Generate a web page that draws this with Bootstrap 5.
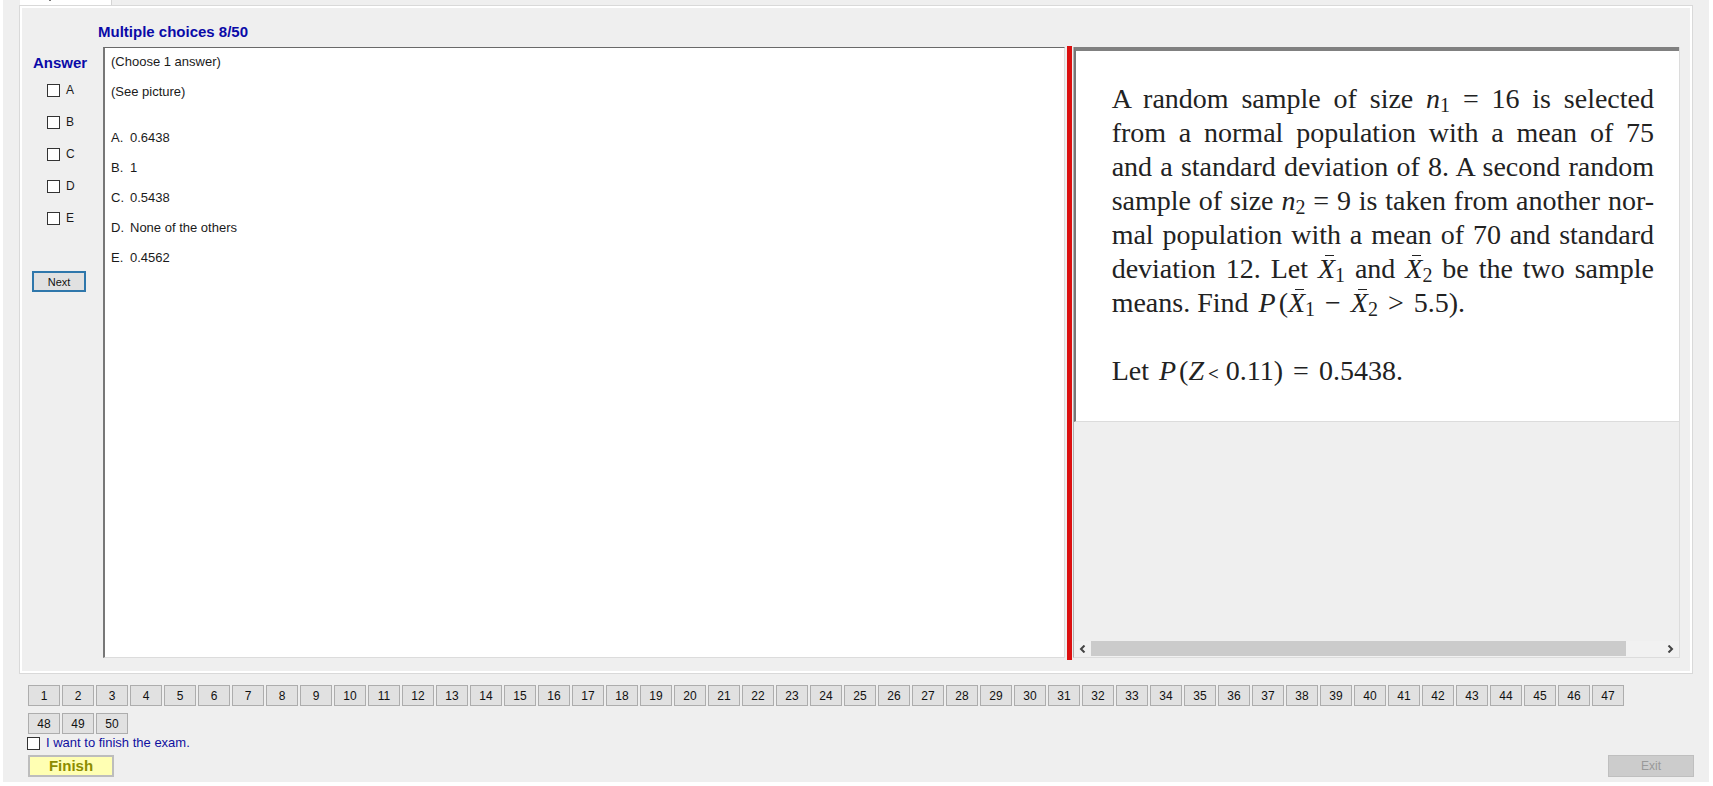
<!DOCTYPE html>
<html lang="en">
<head>
<meta charset="utf-8">
<meta name="viewport" content="width=device-width, initial-scale=1">
<title>Exam</title>
<link href="https://cdn.jsdelivr.net/npm/bootstrap@5.3.0/dist/css/bootstrap.min.css" rel="stylesheet">
<style>
body{font-family:"Liberation Sans",Arial,sans-serif;font-size:13px;line-height:16px;color:#1a1a1a;background:#fff}
.exam-window{margin:0 4px 4px 3px;background:#efefef;min-height:calc(100vh - 4px)}
.tab-strip{height:5px;padding-left:17px}
.tab-head{width:92px;height:5px;padding-left:29px;background:#fff;border-right:1px solid #d4d4d4}
.tab-head::before{content:"";display:block;width:2px;height:1px;background:#777}
.tab-page{margin:0 16px 0 16px;padding:16px 12px 15px 10px;border:1px solid #d9d9d9;box-shadow:inset 0 0 0 2px #fff}
.exam-title{font-size:15px;line-height:20px;font-weight:700;color:#0a0aa8;margin:0 0 5px 68px}
.question-row{height:calc(100vh - 175px);min-height:400px}
.answer-col{width:73px;flex:none;padding:6px 9px 0 2px}
.answer-title{font-size:15px;line-height:20px;font-weight:700;color:#0a0aa8;margin:0 0 7px 1px}
.tick{appearance:none;width:13px;height:13px;flex:none;border:1px solid #333;background:#fff;border-radius:0;margin:0}
.tick:checked{background:#333;box-shadow:inset 0 0 0 2px #fff}
.answer-opt{height:20px;margin:0 0 12px 15px;font-size:12px;gap:6px}
.plain-btn{display:flex;align-items:center;justify-content:center;padding:0;border:1px solid #adadad;background:#e1e1e1;color:#111;font-size:12px;line-height:14px}
.next-btn{width:54px;height:21px;border:2px solid #2f77ab;font-size:11px;margin-top:43px}
.question-box{flex:957 1 0;min-width:0;background:#fff;border:1px solid #dcdcdc;border-top-color:#696969;border-left:2px solid #777;padding:6px}
.question-box p{margin:0 0 14px}
.choice-list{margin:30px 0 0;padding:0;list-style:none;display:grid;gap:14px}
.choice-list li{display:flex}
.choice-list span{width:19px}
.splitter{width:5px;margin:-1px 1px 0 2px;flex:none;height:calc(100% + 3px);background:#dc1010}
.picture-pane{flex:612 1 0;min-width:0;border-right:1px solid #dcdcdc;border-bottom:1px solid #dcdcdc;border-left:1px solid #b0b0b0}
.picture{background:#fff;border-top:4px solid #808080;border-left:2px solid #777;border-bottom:1px solid #dcdcdc;padding:31px 25px 33px 36px;font-family:"Liberation Serif",serif;font-size:28px;line-height:34px;color:#222}
.picture div{white-space:nowrap;height:34px}
.full{text-align:justify;text-align-last:justify}
.picture sub{font-size:20px;line-height:0;bottom:-4px}
.math-op{margin:0 3px}
.xbar{position:relative}
.xbar::before{content:"";position:absolute;left:7px;right:1px;top:2px;height:1px;background:#222}
.lt-sign{font-size:19px;font-weight:700;margin-left:4px}
.scroll-track{height:16px;background:#f1f1f1}
.scroll-track button{width:17px;height:16px;border:0;background:none;padding:0;display:flex;align-items:center;justify-content:center}
.scroll-thumb{background:#cbcbcb;height:15px;flex:536 1 0}
.scroll-free{flex:36 1 0}
.footer-area{padding:11px 15px 5px 25px}
.number-grid{gap:7px 2px;padding-right:48px}
.number-grid .plain-btn{width:32px;height:21px}
.finish-check{height:16px;gap:6px;color:#1010a0;margin:1px 0 4px -1px}
.finish-btn{width:86px;height:22px;border:2px solid #bdbdbd;background:#ffffb3;color:#8c8c00;font-size:15px;font-weight:700;line-height:16px}
.exit-btn{width:86px;height:22px;background:#ccc;border-color:#bfbfbf;color:#999}
</style>
</head>
<body>
<main class="exam-window">
  <div class="tab-strip"><div class="tab-head"></div></div>
  <section class="tab-page">
    <h1 class="exam-title">Multiple choices 8/50</h1>
    <div class="question-row d-flex">
      <div class="answer-col">
        <h2 class="answer-title">Answer</h2>
        <label class="answer-opt d-flex align-items-center"><input class="tick" type="checkbox">A</label>
        <label class="answer-opt d-flex align-items-center"><input class="tick" type="checkbox">B</label>
        <label class="answer-opt d-flex align-items-center"><input class="tick" type="checkbox">C</label>
        <label class="answer-opt d-flex align-items-center"><input class="tick" type="checkbox">D</label>
        <label class="answer-opt d-flex align-items-center"><input class="tick" type="checkbox">E</label>
        <button type="button" class="plain-btn next-btn">Next</button>
      </div>
      <div class="question-box">
        <p>(Choose 1 answer)</p>
        <p>(See picture)</p>
        <ul class="choice-list">
          <li><span>A.</span>0.6438</li>
          <li><span>B.</span>1</li>
          <li><span>C.</span>0.5438</li>
          <li><span>D.</span>None of the others</li>
          <li><span>E.</span>0.4562</li>
        </ul>
      </div>
      <div class="splitter"></div>
      <div class="picture-pane d-flex flex-column justify-content-between">
        <div class="picture">
          <div class="full">A random sample of size <i>n</i><sub>1</sub> = 16 is selected</div>
          <div class="full">from a normal population with a mean of 75</div>
          <div class="full">and a standard deviation of 8. A second random</div>
          <div class="full">sample of size <i>n</i><sub>2</sub> = 9 is taken from another nor-</div>
          <div class="full">mal population with a mean of 70 and standard</div>
          <div class="full">deviation 12. Let <i class="xbar">X</i><sub>1</sub> and <i class="xbar">X</i><sub>2</sub> be the two sample</div>
          <div>means. Find <i class="math-op">P</i>(<i class="xbar">X</i><sub>1</sub> <span class="math-op">−</span> <i class="xbar">X</i><sub>2</sub> <span class="math-op">&gt;</span> 5.5).</div>
          <div></div>
          <div>Let <i class="math-op">P</i>(<i>Z</i><span class="lt-sign">&lt;</span> 0.11) <span class="math-op">=</span> 0.5438.</div>
        </div>
        <div class="scroll-track d-flex">
          <button type="button" aria-label="Scroll left"><svg width="7" height="8" viewBox="0 0 7 8"><path d="M5.500 .5 2 4l3.500 3.500" fill="none" stroke="#444" stroke-width="2"/></svg></button>
          <div class="scroll-thumb"></div><div class="scroll-free"></div>
          <button type="button" aria-label="Scroll right"><svg width="7" height="8" viewBox="0 0 7 8"><path d="M1.500 .5 5 4 1.500 7.500" fill="none" stroke="#444" stroke-width="2"/></svg></button>
        </div>
      </div>
    </div>
  </section>
  <footer class="footer-area">
    <div class="number-grid d-flex flex-wrap" id="numbers"></div>
    <label class="finish-check d-flex align-items-center"><input class="tick" type="checkbox">I want to finish the exam.</label>
    <div class="d-flex justify-content-between">
      <button type="button" class="plain-btn finish-btn">Finish</button>
      <button type="button" class="plain-btn exit-btn" disabled>Exit</button>
    </div>
  </footer>
</main>
<script src="https://cdn.jsdelivr.net/npm/bootstrap@5.3.0/dist/js/bootstrap.bundle.min.js"></script>
<script>
const grid = document.getElementById('numbers');
for (let n = 1; n <= 50; n++) {
  const b = document.createElement('button');
  b.type = 'button';
  b.className = 'plain-btn';
  b.textContent = n;
  grid.append(b);
}
</script>
</body>
</html>
